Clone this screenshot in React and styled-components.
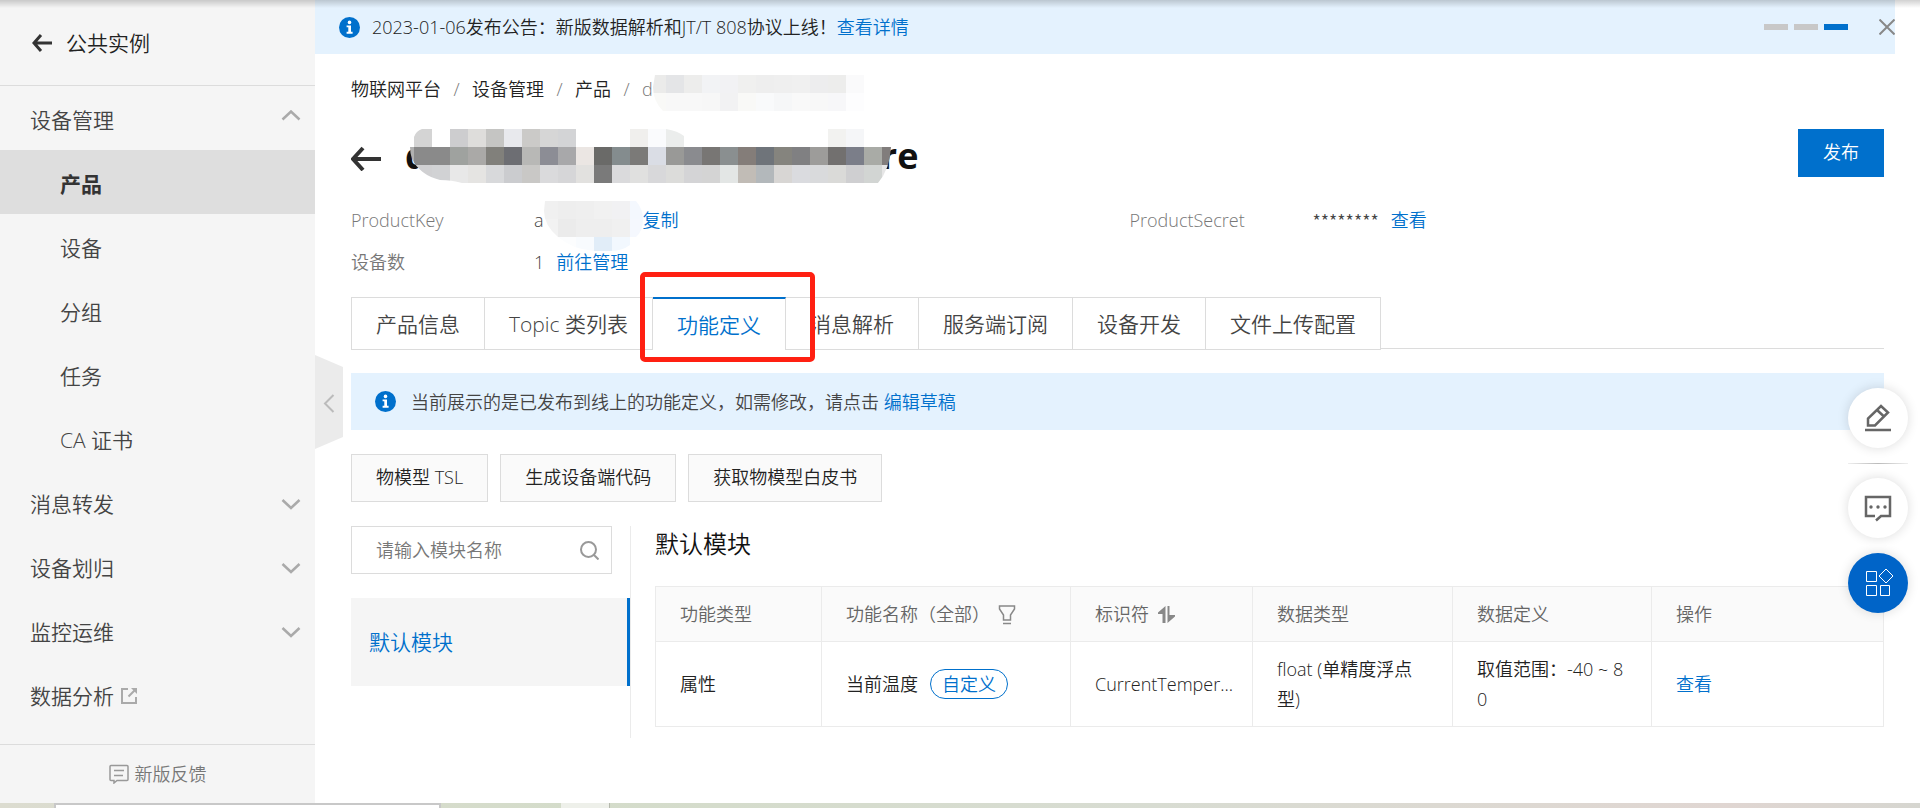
import React from "react";
import styled, { createGlobalStyle } from "styled-components";

const BLUE = "#0070cc";

const GlobalStyle = createGlobalStyle`
  * {
    box-sizing: border-box;
  }
  body {
    margin: 0;
    color: #222;
    background: #fff;
    font-family: "Open Sans", "Noto Sans CJK SC", sans-serif;
    font-size: 18px;
    font-weight: 350;
    line-height: 30px;
  }
  button, input {
    font: inherit;
    color: inherit;
    margin: 0;
  }
  button {
    padding: 0;
    border: 0;
    background: none;
    cursor: pointer;
  }
  a {
    color: inherit;
    text-decoration: none;
  }
  svg {
    display: block;
    flex-shrink: 0;
  }
`;

const Page = styled.div`
  display: flex;
  flex-direction: column;
  min-height: 100vh;
`;
const TopShade = styled.div`
  position: absolute;
  top: 0;
  left: 0;
  right: 0;
  height: 8px;
  background: linear-gradient(rgba(0, 0, 0, 0.18), rgba(0, 0, 0, 0));
`;
const Body = styled.div`
  display: flex;
  flex: 1;
`;

/* sidebar */
const Sidebar = styled.aside`
  display: flex;
  flex-direction: column;
  flex: 0 0 315px;
  background: #f5f5f5;
  color: #444;
  font-size: 21px;
`;
const SideHeader = styled.a`
  display: flex;
  align-items: center;
  gap: 14px;
  height: 86px;
  padding: 0 32px;
  border-bottom: 1px solid #dcdcdc;
  color: #222;
`;
const Nav = styled.nav`
  flex: 1;
`;
const NavGroup = styled.button`
  display: flex;
  align-items: center;
  width: 100%;
  height: 64px;
  padding: 4px 14px 0 30px;
  text-align: left;
`;
const NavLabel = styled.span`
  flex: 1;
`;
const NavItem = styled.a`
  display: flex;
  align-items: center;
  gap: 6px;
  height: 64px;
  padding: 4px 0 0 ${(props) => (props.$sub ? 60 : 30)}px;
  background: ${(props) => (props.$active ? "#dedede" : "transparent")};
  color: ${(props) => (props.$active ? "#333" : "#444")};
  font-weight: ${(props) => (props.$active ? 700 : 350)};
`;
const Feedback = styled.a`
  display: flex;
  align-items: center;
  justify-content: center;
  gap: 6px;
  height: 59px;
  border-top: 1px solid #dcdcdc;
  color: #777;
  font-size: 18px;
`;

/* main */
const Main = styled.main`
  position: relative;
  flex: 1;
  min-width: 0;
`;
const Banner = styled.div`
  display: flex;
  align-items: center;
  gap: 12px;
  height: 54px;
  margin-right: 25px;
  padding-left: 24px;
  background: #e4f2fe;
`;
const Link = styled.a`
  color: ${BLUE};
`;
const BannerDots = styled.div`
  display: flex;
  gap: 6px;
  margin-left: auto;
`;
const Dot = styled.button`
  width: 24px;
  height: 6px;
  background: ${(props) => (props.$active ? BLUE : "#c8c8c8")};
`;
const CloseButton = styled.button`
  margin-left: 19px;
`;
const Content = styled.div`
  padding: 20px 36px 24px;
`;
const Breadcrumb = styled.nav`
  display: flex;
  align-items: center;
  height: 30px;
  color: #777;
`;
const Crumb = styled.a`
  color: #222;
  &::after {
    content: "/";
    display: inline-block;
    width: 31px;
    color: #777;
    text-align: center;
  }
`;
const TitleRow = styled.div`
  display: flex;
  justify-content: space-between;
  align-items: flex-start;
  margin-top: 25px;
`;
const TitleGroup = styled.div`
  display: flex;
  align-items: center;
  gap: 24px;
  height: 54px;
`;
const Title = styled.h1`
  display: flex;
  align-items: center;
  margin: 0;
  color: #111;
  font-size: 36px;
  font-weight: 700;
  line-height: 54px;
`;
/* sits above the letters it hides */
const Cover = styled.svg`
  position: relative;
  margin: ${(props) => `${-18 + props.$drop}px ${props.$right}px ${-18 - props.$drop}px ${props.$left}px`};
`;
const Button = styled.button`
  height: 48px;
  padding: 0 24px 2px;
  border: 1px solid ${(props) => (props.$primary ? BLUE : "#dcdcdc")};
  background: ${(props) => (props.$primary ? BLUE : "#fafafa")};
  color: ${(props) => (props.$primary ? "#fff" : "#222")};
`;
const Info = styled.dl`
  display: grid;
  grid-template-columns: 1fr 1fr;
  column-gap: 24px;
  margin: 16px 0 14px;
`;
const InfoItem = styled.div`
  display: flex;
  align-items: center;
  height: 42px;
`;
const InfoName = styled.dt`
  width: 183px;
  color: #777;
`;
const InfoValue = styled.dd`
  display: flex;
  align-items: center;
  gap: ${(props) => props.$gap || 0}px;
  margin: 0;
  color: #444;
`;
const Secret = styled.span`
  font-family: "Noto Sans CJK SC", sans-serif;
`;
const Tabs = styled.div`
  display: flex;
  height: 52px;
  border-bottom: 1px solid #dcdcdc;
`;
const Tab = styled.button`
  position: relative;
  height: 53px;
  padding: 0 24px;
  border: solid #dcdcdc;
  border-width: ${(props) => (props.$active ? "2px 1px 0 0" : "1px 1px 1px 0")};
  border-top-color: ${(props) => (props.$active ? BLUE : "#dcdcdc")};
  background: #fff;
  color: ${(props) => (props.$active ? BLUE : "#444")};
  font-size: 21px;
  &:first-child {
    border-left-width: 1px;
  }
`;
const Marker = styled.span`
  position: absolute;
  z-index: 1;
  top: -27px;
  right: -30px;
  bottom: -12px;
  left: -13px;
  border: 5px solid #ff2012;
  border-radius: 5px;
  pointer-events: none;
`;
const Notice = styled.div`
  display: flex;
  align-items: center;
  gap: 15px;
  height: 57px;
  margin: 24px 0;
  padding: 0 24px;
  background: #e4f2fe;
  color: #444;
`;
const Actions = styled.div`
  display: flex;
  gap: 12px;
  margin-bottom: 24px;
`;
const Split = styled.div`
  display: flex;
`;
const Modules = styled.div`
  flex: 0 0 280px;
  min-width: 0;
  border-right: 1px solid #ebebeb;
`;
const SearchBox = styled.label`
  display: flex;
  align-items: center;
  height: 48px;
  margin: 0 18px 24px 0;
  padding: 0 12px 0 24px;
  border: 1px solid #dcdcdc;
`;
const SearchInput = styled.input`
  flex: 1;
  width: 100%;
  min-width: 0;
  padding: 0;
  border: 0;
  outline: 0;
  background: none;
  &::placeholder {
    color: #777;
  }
`;
const ModuleItem = styled.button`
  width: 100%;
  height: 88px;
  padding-left: 18px;
  border-right: 3px solid ${BLUE};
  background: #f5f5f5;
  color: ${BLUE};
  font-size: 21px;
  text-align: left;
`;
const Detail = styled.section`
  flex: 1;
  min-width: 0;
  padding: 0 0 11px 24px;
`;
const DetailTitle = styled.h2`
  margin: 0 0 24px;
  color: #111;
  font-size: 24px;
  font-weight: 350;
  line-height: 36px;
`;
const Table = styled.table`
  width: 100%;
  table-layout: fixed;
  border-collapse: collapse;
`;
const Col = styled.col`
  width: ${(props) => props.$w};
`;
const Th = styled.th`
  height: 55px;
  padding: 0 24px;
  border: 1px solid #ebebeb;
  background: #fafafa;
  color: #666;
  font-weight: 350;
  text-align: left;
`;
const Td = styled.td`
  height: 85px;
  padding: 12px 24px;
  border: 1px solid #ebebeb;
  word-break: break-all;
`;
const Inline = styled.div`
  display: flex;
  align-items: center;
  gap: ${(props) => props.$gap || 0}px;
  white-space: nowrap;
`;
const Tag = styled.span`
  padding: 0 11px;
  border: 1px solid ${BLUE};
  border-radius: 15px;
  color: ${BLUE};
  line-height: 28px;
`;

/* things that float over the page */
const Collapse = styled.button`
  position: absolute;
  top: 355px;
  left: 0;
`;
const FloatBar = styled.div`
  position: fixed;
  top: 388px;
  right: 12px;
  display: flex;
  flex-direction: column;
  gap: 15px;
`;
const FloatButton = styled.button`
  display: flex;
  align-items: center;
  justify-content: center;
  width: 60px;
  height: 60px;
  border-radius: 50%;
  background: ${(props) => (props.$primary ? "#0064c8" : "#fff")};
  box-shadow: 0 0 12px rgba(0, 0, 0, 0.14);
`;
const FloatLine = styled.div`
  height: 1px;
  margin-bottom: -1px;
  background: linear-gradient(90deg, #eee, #bbb, #eee);
`;

/* sliver of the desktop under the window */
const Desktop = styled.div`
  display: flex;
  height: 5px;
  background: linear-gradient(90deg, #dcdcd0, #d4dcca 30%, #d8dcd2 60%, #e0d6d2 90%, #d6d6d0);
`;
const DesktopWindow = styled.div`
  width: 387px;
  margin: 0 120px 0 54px;
  border: 2px solid #c8c8c8;
  border-bottom: 0;
  background: #fff;
`;
const DesktopPanel = styled.div`
  width: 49px;
  border-right: 1px solid #b4b8ac;
  background: #eef0ea;
`;

const InfoIcon = () => (
  <svg width="21" height="21" viewBox="0 0 21 21">
    <circle cx="10.5" cy="10.5" r="10.5" fill={BLUE} />
    <circle cx="10.5" cy="5.4" r="1.8" fill="#fff" />
    <path d="M7.6 8.4h4.4v6.4h1.6v1.9H7.6v-1.9h1.7v-4.5H7.6z" fill="#fff" />
  </svg>
);

// headroom is empty space above the arrow, it lowers it onto the x-height of the label
const BackArrow = ({ width, height, stroke, headroom = 0 }) => (
  <svg
    width={width}
    height={height + headroom}
    viewBox={`0 ${-headroom} ${width} ${height + headroom}`}
    fill="none"
    stroke="#333"
    strokeWidth={stroke}
  >
    <path d={`M${width} ${height / 2}H2M${height / 2} 1L2 ${height / 2}L${height / 2} ${height - 1}`} />
  </svg>
);

const GroupChevron = ({ open }) => (
  <svg width="20" height="20" viewBox="0 0 20 20" fill="none" stroke="#aaa" strokeWidth="2.500">
    <path d={open ? "M1.500 9.500L10 1.500L18.500 9.500" : "M1.500 6L10 14L18.500 6"} />
  </svg>
);

const CELL = 18;

// rows of coloured squares, cut to a rough brush stroke
const Mosaic = ({ id, width, height, start, clip, rows, left = 0, right = 0, drop = 0 }) => (
  <Cover
    $left={left}
    $right={right}
    $drop={drop}
    width={width}
    height={height}
    viewBox={`0 0 ${width} ${height}`}
    shapeRendering="crispEdges"
  >
    <clipPath id={id}>
      <path d={clip} />
    </clipPath>
    <g clipPath={`url(#${id})`}>
      {rows.map((row, y) =>
        row.split(" ").map((c, x) => c !== "-" && <rect key={`${y}-${x}`} x={start + x * CELL} y={y * CELL} width={CELL} height={CELL} fill={`#${c}`} />)
      )}
    </g>
  </Cover>
);

const CRUMB_ROWS = [
  "ebebea e4e5e7 ededec f2f3f5 f2f2f4 f0f0ef eeeeee efefef f0f0f0 ededee ededec fafafb",
  "f9f9f7 f8f8f8 f8f8f8 f7f7f7 f2f2f3 f9f9f7 f9fafb f6f7f8 f9f9f9 f8f8f8 f7f7f9 fdfdfe",
];
const TITLE_ROWS = [
  "- d4d4d4 - cdcdcf dedddb c5c5c3 e8e9ed cbcac8 d6d6d6 d3d4d6 - - - f0efed fafbfd ebedec - - - - - - - - f2f2f0 f5f6f8 - -",
  "b0b0b0 8a8a8a 8a8a8a 9fa29f aaa9a7 81807b 6d6e73 b8b8b6 8c8d95 a8a8aa ebe6e3 6a6a68 848c8e 7b7a78 dadde5 999997 8a8b8f 787674 8a8f90 847d79 6f747a 85847e 808082 9d9c9a 72706f 7b7e89 a9aba6 817d7c",
  "d0d0d2 d0d0d2 d1d2d4 e8e8e8 e5e4e2 d8d9db cbcccf c9c8c6 dadadc d6d6d8 e2e1df 7a7a7a dadadc e0e0df d8d8da dcdcda d4d4d6 d4d4d4 e3e6e5 c1bcb6 b3b8bb d8d6d4 dadbdf d9dadc dadad8 cfcfd1 d2d5d3 e6e6e6",
];
const KEY_ROWS = [
  "f0f0f0 eeeeee efefef f1f1f1 f1f1f3 f4f8fe",
  "f2f2f2 ebebeb eeeeee eeeeee f0f0f0 f5f8fe",
  "- fcfdfe f8fbfe e1edf8 f2f8fe -",
];

const SUB_ITEMS = ["产品", "设备", "分组", "任务", "CA 证书"];
const GROUPS = ["消息转发", "设备划归", "监控运维"];
const TABS = ["产品信息", "Topic 类列表", "功能定义", "消息解析", "服务端订阅", "设备开发", "文件上传配置"];
const COL_WIDTHS = ["166px", "249px", "182px", "200px", "199px", "auto"];

const Side = () => (
  <Sidebar>
    <SideHeader href="#">
      <BackArrow width={20} height={18} stroke={3} />
      公共实例
    </SideHeader>
    <Nav>
      <NavGroup>
        <NavLabel>设备管理</NavLabel>
        <GroupChevron open />
      </NavGroup>
      {SUB_ITEMS.map((name, i) => (
        <NavItem key={name} href="#" $sub $active={i === 0}>
          {name}
        </NavItem>
      ))}
      {GROUPS.map((name) => (
        <NavGroup key={name}>
          <NavLabel>{name}</NavLabel>
          <GroupChevron />
        </NavGroup>
      ))}
      <NavItem href="#">
        数据分析
        <svg width="18" height="18" viewBox="0 0 18 18" fill="none" stroke="#aaa" strokeWidth="2">
          <path d="M8 2H2V16H16V10M8.500 9.500L15 3" />
          <path d="M11 1H17V7Z" fill="#aaa" stroke="none" />
        </svg>
      </NavItem>
    </Nav>
    <Feedback href="#">
      <svg width="20" height="20" viewBox="0 0 20 20" fill="none" stroke="#999" strokeWidth="1.5">
        <path d="M2 1.500H18Q19 1.500 19 2.500V15.500Q19 16.500 18 16.500H8L5 19V16.500H2Q1 16.500 1 15.500V2.500Q1 1.500 2 1.500ZM5 6.500H15M5 11.500H14" />
      </svg>
      新版反馈
    </Feedback>
  </Sidebar>
);

const FunctionTable = () => (
  <Table>
    <colgroup>
      {COL_WIDTHS.map((w, i) => (
        <Col key={i} $w={w} />
      ))}
    </colgroup>
    <thead>
      <tr>
        <Th>功能类型</Th>
        <Th>
          <Inline $gap={8}>
            功能名称（全部）
            <button aria-label="筛选">
              <svg width="18" height="21" viewBox="0 0 18 21" fill="none" stroke="#888" strokeWidth="1.500">
                <path d="M1.500 2H16.500V5L12.500 11V16H5.500V11L1.500 5ZM5 19.500H13" />
              </svg>
            </button>
          </Inline>
        </Th>
        <Th>
          <Inline $gap={9}>
            标识符
            <button aria-label="排序">
              <svg width="17" height="17" viewBox="0 0 17 17" fill="#888">
                <path d="M7.500 0V17H4.500V8H0V6.500ZM9.500 17V0H11.500V9H17V10.500Z" />
              </svg>
            </button>
          </Inline>
        </Th>
        <Th>数据类型</Th>
        <Th>数据定义</Th>
        <Th>操作</Th>
      </tr>
    </thead>
    <tbody>
      <tr>
        <Td>属性</Td>
        <Td>
          <Inline $gap={12}>
            当前温度<Tag>自定义</Tag>
          </Inline>
        </Td>
        <Td>
          <Inline>CurrentTemper...</Inline>
        </Td>
        <Td>float (单精度浮点型)</Td>
        <Td>取值范围：-40 ~ 80</Td>
        <Td>
          <Link href="#">查看</Link>
        </Td>
      </tr>
    </tbody>
  </Table>
);

export default function App() {
  return (
    <Page>
      <GlobalStyle />
      <Body>
        <Side />
        <Main>
          <Banner>
            <InfoIcon />
            <span>
              2023-01-06发布公告：新版数据解析和JT/T 808协议上线！<Link href="#">查看详情</Link>
            </span>
            <BannerDots>
              <Dot aria-label="1" />
              <Dot aria-label="2" />
              <Dot aria-label="3" $active />
            </BannerDots>
            <CloseButton aria-label="关闭">
              <svg width="16" height="16" viewBox="0 0 16 16" stroke="#888" strokeWidth="2">
                <path d="M0.500 0.500L15.500 15.500M15.500 0.500L0.500 15.500" />
              </svg>
            </CloseButton>
          </Banner>
          <Content>
            <Breadcrumb>
              <Crumb href="#">物联网平台</Crumb>
              <Crumb href="#">设备管理</Crumb>
              <Crumb href="#">产品</Crumb>
              <span>d</span>
              <Mosaic id="crumb" width={211} height={36} start={-5} drop={4} rows={CRUMB_ROWS} clip="M2 0H211V36H10Q0 26 0 12Z" />
            </Breadcrumb>
            <TitleRow>
              <TitleGroup>
                <BackArrow width={30} height={24} stroke={4} headroom={6} />
                <Title>
                  d
                  <Mosaic
                    id="title"
                    width={482}
                    height={54}
                    start={-14}
                    rows={TITLE_ROWS}
                    left={-18}
                    right={-11}
                    clip="M12 0H256Q268 2 274 7V18H400V0H460V18H481Q480 40 468 54H52Q42 51 30 51Q10 46 2 30Q0 24 0 18H4V8Q6 2 12 0Z"
                  />
                  re
                </Title>
              </TitleGroup>
              <Button $primary>发布</Button>
            </TitleRow>
            <Info>
              <InfoItem>
                <InfoName>ProductKey</InfoName>
                <InfoValue>
                  a
                  <Mosaic
                    id="key"
                    width={99}
                    height={54}
                    start={-4}
                    drop={8}
                    rows={KEY_ROWS}
                    clip="M1 0H92Q99 8 99 18Q99 30 92 36H86V44Q78 50 66 50H50Q28 48 14 36Q0 24 0 10Z"
                  />
                  <Link href="#">复制</Link>
                </InfoValue>
              </InfoItem>
              <InfoItem>
                <InfoName>ProductSecret</InfoName>
                <InfoValue $gap={12}>
                  <Secret>********</Secret>
                  <Link href="#">查看</Link>
                </InfoValue>
              </InfoItem>
              <InfoItem>
                <InfoName>设备数</InfoName>
                <InfoValue $gap={12}>
                  1<Link href="#">前往管理</Link>
                </InfoValue>
              </InfoItem>
            </Info>
            <Tabs role="tablist">
              {TABS.map((name, i) => (
                <Tab key={name} role="tab" aria-selected={i === 2} $active={i === 2}>
                  {name}
                  {i === 2 && <Marker />}
                </Tab>
              ))}
            </Tabs>
            <Notice>
              <InfoIcon />
              <span>
                当前展示的是已发布到线上的功能定义，如需修改，请点击 <Link href="#">编辑草稿</Link>
              </span>
            </Notice>
            <Actions>
              <Button>物模型 TSL</Button>
              <Button>生成设备端代码</Button>
              <Button>获取物模型白皮书</Button>
            </Actions>
            <Split>
              <Modules>
                <SearchBox>
                  <SearchInput type="text" aria-label="模块名称" placeholder="请输入模块名称" />
                  <svg width="19" height="19" viewBox="0 0 19 19" fill="none" stroke="#999" strokeWidth="2">
                    <circle cx="8.500" cy="8.500" r="7.500" />
                    <path d="M13.500 13.500L18.500 18.500" />
                  </svg>
                </SearchBox>
                <ModuleItem>默认模块</ModuleItem>
              </Modules>
              <Detail>
                <DetailTitle>默认模块</DetailTitle>
                <FunctionTable />
              </Detail>
            </Split>
          </Content>
          <Collapse aria-label="收起导航">
            <svg width="28" height="94" viewBox="0 0 28 94" fill="none">
              <path d="M0 0L28 12V82L0 94Z" fill="#ebebeb" />
              <path d="M18.500 40L10 48.500L18.500 57" stroke="#bbb" strokeWidth="2" />
            </svg>
          </Collapse>
        </Main>
      </Body>
      <Desktop>
        <DesktopWindow />
        <DesktopPanel />
      </Desktop>
      <FloatBar>
        <FloatButton aria-label="编辑">
          <svg width="28" height="28" viewBox="0 0 28 28" fill="none" stroke="#666" strokeWidth="2.500">
            <path d="M4 21.500V14.500L17 2L24 8.500L11 21.500ZM13 6L20 12.500M1 26H27" />
          </svg>
        </FloatButton>
        <FloatLine />
        <FloatButton aria-label="咨询">
          <svg width="28" height="28" viewBox="0 0 28 28" fill="none" stroke="#666" strokeWidth="2.500">
            <path d="M11 22H2V3H26V22H17L12 26.500" />
            <g fill="#666" stroke="none">
              <circle cx="7" cy="13" r="1.700" />
              <circle cx="14" cy="13" r="1.700" />
              <circle cx="21" cy="13" r="1.700" />
            </g>
          </svg>
        </FloatButton>
        <FloatButton aria-label="应用" $primary>
          <svg width="30" height="30" viewBox="0 0 30 30" fill="none" stroke="#fff">
            <path d="M3.500 3.500H13.500V13.500H3.500ZM3.500 17.500H13.500V27.500H3.500ZM17.500 17.500H26.500V27.500H17.500ZM23 1L30 8L23 15L16 8Z" />
          </svg>
        </FloatButton>
      </FloatBar>
      <TopShade />
    </Page>
  );
}
